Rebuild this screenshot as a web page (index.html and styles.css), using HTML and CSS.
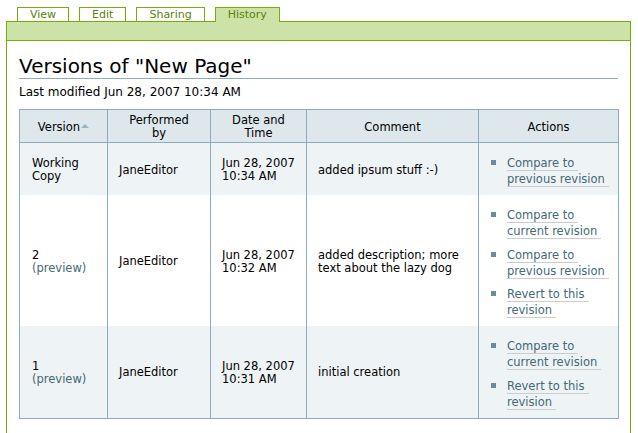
FILE: index.html
```html
<!DOCTYPE html>
<html lang="en">
<head>
<meta charset="utf-8">
<title>Versions of "New Page"</title>
<link rel="stylesheet" href="styles.css">
</head>
<body>
<div class="page">
  <ul class="tabs">
    <li class="tab"><a href="#">View</a></li>
    <li class="tab"><a href="#">Edit</a></li>
    <li class="tab"><a href="#">Sharing</a></li>
    <li class="tab selected"><a href="#">History</a></li>
  </ul>
  <div class="panel">
    <div class="band"></div>
    <div class="content">
      <h1 class="title">Versions of "New Page"</h1>
      <div class="byline">Last modified Jun 28, 2007 10:34 AM</div>
      <table class="versions">
        <colgroup>
          <col class="c-version">
          <col class="c-by">
          <col class="c-date">
          <col class="c-comment">
          <col class="c-actions">
        </colgroup>
        <thead>
          <tr>
            <th>Version<span class="sort-arrow"></span></th>
            <th>Performed<br>by</th>
            <th>Date and<br>Time</th>
            <th>Comment</th>
            <th>Actions</th>
          </tr>
        </thead>
        <tbody>
          <tr class="shade">
            <td class="ver">Working<br>Copy</td>
            <td>JaneEditor</td>
            <td>Jun 28, 2007<br>10:34 AM</td>
            <td>added ipsum stuff :-)</td>
            <td class="actions">
              <ul>
                <li><span class="act"><a href="#">Compare to previous revision</a></span></li>
              </ul>
            </td>
          </tr>
          <tr>
            <td class="ver">2<br><a class="preview" href="#">(preview)</a></td>
            <td>JaneEditor</td>
            <td>Jun 28, 2007<br>10:32 AM</td>
            <td>added description; more text about the lazy dog</td>
            <td class="actions">
              <ul>
                <li><span class="act"><a href="#">Compare to current revision</a></span></li>
                <li><span class="act"><a href="#">Compare to previous revision</a></span></li>
                <li><span class="act"><a href="#">Revert to this revision</a></span></li>
              </ul>
            </td>
          </tr>
          <tr class="shade">
            <td class="ver">1<br><a class="preview" href="#">(preview)</a></td>
            <td>JaneEditor</td>
            <td>Jun 28, 2007<br>10:31 AM</td>
            <td>initial creation</td>
            <td class="actions">
              <ul>
                <li><span class="act"><a href="#">Compare to current revision</a></span></li>
                <li><span class="act"><a href="#">Revert to this revision</a></span></li>
              </ul>
            </td>
          </tr>
        </tbody>
      </table>
    </div>
  </div>
</div>
</body>
</html>
```
FILE: styles.css
```css
html, body {
  margin: 0;
  padding: 0;
  background: #ffffff;
}
body {
  font-family: "DejaVu Sans", Verdana, sans-serif;
  color: #000000;
  overflow: hidden;
}
.page {
  padding-top: 7px;
}
.tabs {
  list-style: none;
  margin: 0;
  padding: 0 0 0 17px;
  display: flex;
  align-items: flex-start;
  gap: 10px;
  height: 14px;
}
.tab {
  border: 1px solid #74ae0b;
  border-bottom: none;
  background: #ffffff;
  height: 13px;
  line-height: 14px;
  padding: 0 12px;
  font-size: 11px;
}
.tab a {
  color: #578308;
  text-decoration: none;
}
.tab.selected {
  background: #cde2a7;
  height: 14px;
  position: relative;
  z-index: 1;
}
.panel {
  margin: 0 7px 0 6px;
  border: 1px solid #74ae0b;
  border-bottom: none;
  min-height: 411px;
}
.band {
  height: 18px;
  background: #cde2a7;
  border-bottom: 1px solid #74ae0b;
}
.content {
  padding: 0 12px;
}
.title {
  margin: 14px 0 0;
  font-size: 20px;
  font-weight: normal;
  line-height: 23px;
  border-bottom: 1px solid #8cacbb;
}
.byline {
  margin-top: 6px;
  font-size: 12px;
  line-height: 14px;
}
.versions {
  margin-top: 10px;
  width: 599px;
  table-layout: fixed;
  border-collapse: collapse;
  border: 1px solid #8cacbb;
  font-size: 11.5px;
  line-height: 13px;
}
.c-version { width: 88px; }
.c-by { width: 103px; }
.c-date { width: 96px; }
.c-comment { width: 172px; }
.c-actions { width: 140px; }
.versions th {
  background: #dee7ec;
  font-weight: normal;
  text-align: center;
  vertical-align: middle;
  padding: 4px 4px 2px;
  border: 1px solid #8cacbb;
}
.versions td {
  border: 1px solid #8cacbb;
  border-top: none;
  border-bottom: none;
  padding: 2px 8px 0 11px;
  vertical-align: middle;
}
.versions td.ver {
  padding-left: 12px;
}
.versions tr.shade td {
  background: #eef3f5;
}
.sort-arrow {
  display: inline-block;
  width: 0;
  height: 0;
  border-left: 4px solid transparent;
  border-right: 4px solid transparent;
  border-bottom: 4px solid #9bb5c2;
  margin-left: 1px;
  vertical-align: 3px;
}
.preview {
  color: #436976;
  text-decoration: none;
}
.versions td.actions {
  padding: 12px 6px 8px 12px;
}
.actions ul {
  list-style: none;
  margin: 0;
  padding: 0;
}
.actions li {
  display: flex;
  line-height: 16px;
}
.actions li + li {
  margin-top: 7.5px;
}
.actions li::before {
  content: "";
  flex: none;
  width: 5px;
  height: 5px;
  margin-top: 5px;
  margin-right: 11px;
  background: #6a8c9c;
}
.act a {
  color: #436976;
  text-decoration: none;
  border-bottom: 1px solid #cccccc;
  padding-right: 4px;
  -webkit-box-decoration-break: clone;
  box-decoration-break: clone;
}
```
